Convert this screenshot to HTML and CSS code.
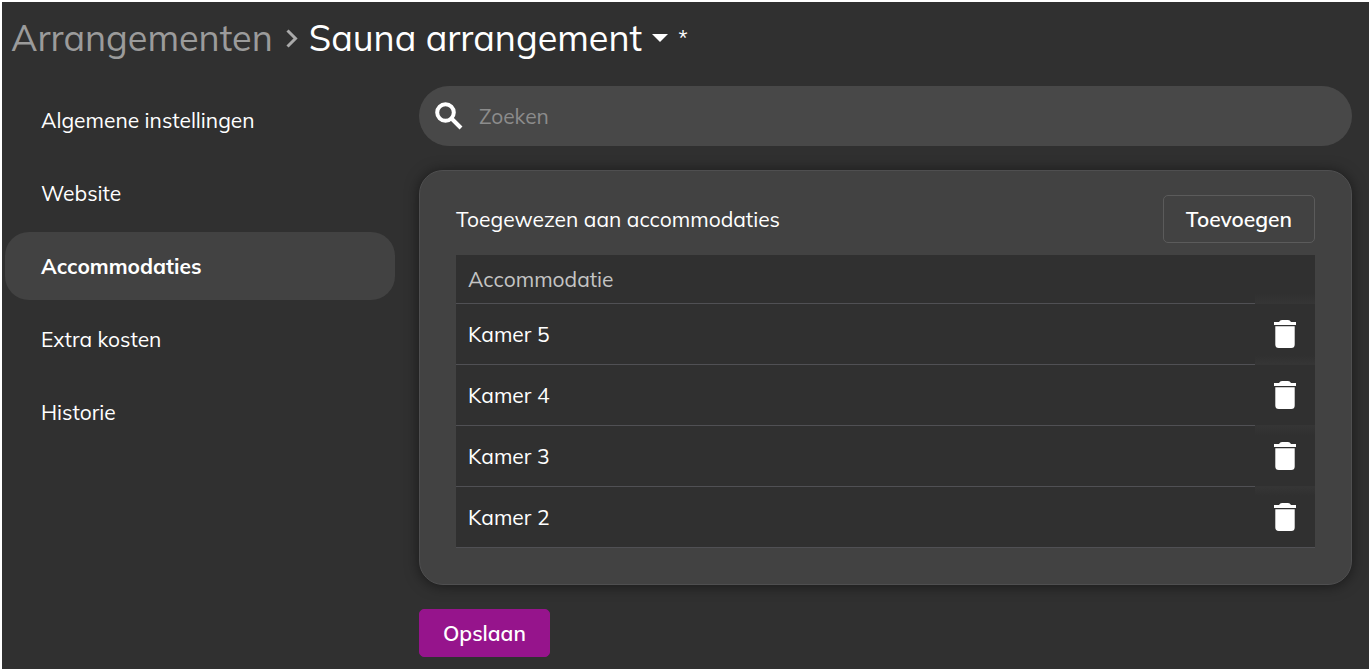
FILE: index.html
```html
<!DOCTYPE html>
<html lang="nl">
  <head>
    <meta charset="utf-8">
    <title>Sauna arrangement</title>
    <link rel="stylesheet" href="styles.css">
  </head>
  <body>

    <svg class="sprite" aria-hidden="true">
      <symbol id="trash" viewBox="0 0 22 28">
        <path d="M0 2h5q1-2 3-2h6q2 0 3 2H22v3H0z"/>
        <path d="M1.300 6.300h19.400V24.500a3.500 3.500 0 0 1-3.500 3.500H4.800a3.500 3.500 0 0 1-3.500-3.500z"/>
      </symbol>
    </svg>

    <div class="app">
      <header class="header">
        <a class="crumb" href="#">Arrangementen</a>
        <svg class="chevron" viewBox="0 0 14 20" aria-hidden="true"><path d="M2.500 2.500L10.500 10.500L2.500 18.500"/></svg>
        <h1 class="title">Sauna arrangement</h1>
        <button class="switch" type="button" aria-label="Ander arrangement"></button>
        <span class="changed">*</span>
      </header>

      <div class="layout">
        <nav class="menu">
          <a href="#">Algemene instellingen</a>
          <a href="#">Website</a>
          <a class="active" href="#">Accommodaties</a>
          <a href="#">Extra kosten</a>
          <a href="#">Historie</a>
        </nav>

        <main class="content">
          <label class="search">
            <svg viewBox="0 0 28 28" aria-hidden="true">
              <circle cx="10.500" cy="10.500" r="8.300"/>
              <path d="M16.500 16.500l9.500 9.500"/>
            </svg>
            <input type="search" placeholder="Zoeken" aria-label="Zoeken">
          </label>

          <section class="card">
            <div class="card-head">
              <h2>Toegewezen aan accommodaties</h2>
              <button class="btn" type="button">Toevoegen</button>
            </div>
            <table class="table">
              <thead>
                <tr><th>Accommodatie</th><td class="action"></td></tr>
              </thead>
              <tbody>
                <tr>
                  <td>Kamer 5</td>
                  <td class="action"><button type="button" aria-label="Verwijder Kamer 5"><svg><use href="#trash"/></svg></button></td>
                </tr>
                <tr>
                  <td>Kamer 4</td>
                  <td class="action"><button type="button" aria-label="Verwijder Kamer 4"><svg><use href="#trash"/></svg></button></td>
                </tr>
                <tr>
                  <td>Kamer 3</td>
                  <td class="action"><button type="button" aria-label="Verwijder Kamer 3"><svg><use href="#trash"/></svg></button></td>
                </tr>
                <tr>
                  <td>Kamer 2</td>
                  <td class="action"><button type="button" aria-label="Verwijder Kamer 2"><svg><use href="#trash"/></svg></button></td>
                </tr>
              </tbody>
            </table>
          </section>

          <button class="btn btn-primary" type="submit">Opslaan</button>
        </main>
      </div>
    </div>

  </body>
</html>
```
FILE: styles.css
```css
* { box-sizing: border-box; }

body {
  margin: 0;
  background-color: #303030;
  color: #fff;
  font-family: Mulish, Muli, Lato, sans-serif;
  font-size: 21px;
  line-height: 28px;
}

a {
  color: inherit;
  text-decoration: none;
}

button, input {
  font: inherit;
  color: inherit;
}

button { cursor: pointer; }

.sprite { display: none; }

.app {
  min-height: 100vh;
  border: 2px solid #fff;
}

.header {
  display: flex;
  align-items: center;
  height: 72px;
  padding: 0 9px;
  font-size: 36px;
  line-height: 70px;
}

.crumb { color: #9b9b9b; }

.chevron {
  width: 14px;
  height: 20px;
  margin: 0 10px 0 12px;
  fill: none;
  stroke: #aaa;
  stroke-width: 3px;
}

.title {
  margin: 0;
  font-size: inherit;
  font-weight: 400;
}

.switch {
  margin: 0 10px;
  padding: 0;
  background: none;
  border: 8px solid transparent;
  border-top-color: #fff;
  border-bottom: none;
}

.changed { font-size: 21px; }

.layout {
  display: flex;
  align-items: flex-start;
  gap: 24px;
  padding: 12px 17px 10px 3px;
}

.menu {
  display: flex;
  flex-direction: column;
  gap: 5px;
  width: 390px;
}

.menu a {
  padding: 20px 36px;
  border-radius: 24px;
}

.menu .active {
  background-color: #424242;
  font-weight: 700;
}

.content {
  flex: 1;
  display: flex;
  flex-direction: column;
  align-items: stretch;
  gap: 24px;
}

.search {
  display: flex;
  align-items: center;
  gap: 16px;
  height: 60px;
  padding: 0 16px;
  background-color: #484848;
  border-radius: 30px;
}

.search svg {
  width: 28px;
  height: 28px;
  fill: none;
  stroke: #fff;
  stroke-width: 4px;
}

.search input {
  flex: 1;
  padding: 0;
  background: none;
  border: none;
  outline: none;
}

.search input::placeholder { color: #8c8c8c; }

.card {
  padding: 24px 36px 36px;
  background-color: #424242;
  border: 1px solid #4f4f50;
  border-radius: 24px;
  box-shadow: 0 1px 14px rgba(0,0,0,0.5);
}

.card-head {
  display: flex;
  justify-content: space-between;
  align-items: center;
  margin-bottom: 12px;
}

.card-head h2 {
  margin: 0;
  font-size: inherit;
  font-weight: 400;
}

.btn {
  height: 48px;
  padding: 0 22px;
  background: none;
  border: 1px solid #5b5b5b;
  border-radius: 5px;
  font-weight: 600;
}

.btn-primary {
  align-self: flex-start;
  padding: 0 23px;
  background-color: #96148c;
  border-color: #96148c;
}

.table {
  width: 100%;
  background-color: #303030;
  border-spacing: 0;
}

.table th, .table td {
  height: 61px;
  padding: 0 12px;
  border-bottom: 1px solid #505054;
  text-align: left;
}

.table thead th, .table thead td {
  height: 49px;
  color: #c4c4c4;
  font-weight: 400;
}

.table .action {
  width: 60px;
  padding: 0;
}

.table thead .action, .table tr:not(:last-child) .action {
  border-bottom-color: #353535;
}

.table thead .action, .table tr:first-child .action {
  background: linear-gradient(to top, #353535, #303030 9px);
}

.table tr:nth-child(n+3) .action {
  background: linear-gradient(#353535, #303030 9px);
}

.action button {
  display: block;
  width: 60px;
  height: 60px;
  padding: 16px 19px;
  background: none;
  border: none;
}

.action svg {
  display: block;
  width: 22px;
  height: 28px;
  fill: #fff;
}
```
